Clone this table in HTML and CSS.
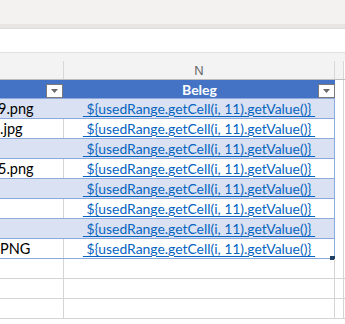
FILE: index.html
```html
<!DOCTYPE html>
<html>
<head>
<meta charset="utf-8">
<link rel="stylesheet" href="styles.css">
</head>
<body>
<div class="app">
  <div class="ribbon"></div>
  <div class="ribbon-edge"></div>
  <div class="formula"></div>
  <div class="colheads">
    <div class="row-cells">
      <div class="cell c1 ch"></div>
      <div class="cell c2 ch">N</div>
      <div class="cell c3 ch"></div>
      <div class="cell c4 ch"></div>
    </div>
  </div>
  <div class="sheet">
    <div class="row-cells trow thead">
      <div class="cell c1"><span class="dd"><svg width="7" height="4" viewBox="0 0 7 4"><path d="M0 0H7L3.5 4Z" fill="#6b6b6b"/></svg></span></div>
      <div class="cell c2 hname">Beleg<span class="dd"><svg width="7" height="4" viewBox="0 0 7 4"><path d="M0 0H7L3.5 4Z" fill="#6b6b6b"/></svg></span></div>
      <div class="cell c3 out"></div>
      <div class="cell c4"></div>
    </div>
    <div class="row-cells trow band">
      <div class="cell c1 txt"><span class="clip">9.png</span></div>
      <div class="cell c2"><a class="link">&nbsp;${usedRange.getCell(i, 11).getValue()}&nbsp;</a></div>
      <div class="cell c3 out"></div>
      <div class="cell c4"></div>
    </div>
    <div class="row-cells trow plain">
      <div class="cell c1 txt"><span class="clip2">.jpg</span></div>
      <div class="cell c2"><a class="link">&nbsp;${usedRange.getCell(i, 11).getValue()}&nbsp;</a></div>
      <div class="cell c3 out"></div>
      <div class="cell c4"></div>
    </div>
    <div class="row-cells trow band">
      <div class="cell c1 txt"></div>
      <div class="cell c2"><a class="link">&nbsp;${usedRange.getCell(i, 11).getValue()}&nbsp;</a></div>
      <div class="cell c3 out"></div>
      <div class="cell c4"></div>
    </div>
    <div class="row-cells trow plain">
      <div class="cell c1 txt"><span class="clip">5.png</span></div>
      <div class="cell c2"><a class="link">&nbsp;${usedRange.getCell(i, 11).getValue()}&nbsp;</a></div>
      <div class="cell c3 out"></div>
      <div class="cell c4"></div>
    </div>
    <div class="row-cells trow band">
      <div class="cell c1 txt"></div>
      <div class="cell c2"><a class="link">&nbsp;${usedRange.getCell(i, 11).getValue()}&nbsp;</a></div>
      <div class="cell c3 out"></div>
      <div class="cell c4"></div>
    </div>
    <div class="row-cells trow plain">
      <div class="cell c1 txt"></div>
      <div class="cell c2"><a class="link">&nbsp;${usedRange.getCell(i, 11).getValue()}&nbsp;</a></div>
      <div class="cell c3 out"></div>
      <div class="cell c4"></div>
    </div>
    <div class="row-cells trow band">
      <div class="cell c1 txt"></div>
      <div class="cell c2"><a class="link">&nbsp;${usedRange.getCell(i, 11).getValue()}&nbsp;</a></div>
      <div class="cell c3 out"></div>
      <div class="cell c4"></div>
    </div>
    <div class="row-cells trow plain last">
      <div class="cell c1 txt"><span class="clip2">PNG</span></div>
      <div class="cell c2 handle-cell"><a class="link">&nbsp;${usedRange.getCell(i, 11).getValue()}&nbsp;</a><span class="handle"></span></div>
      <div class="cell c3 out"></div>
      <div class="cell c4"></div>
    </div>
    <div class="row-cells grow">
      <div class="cell c1"></div><div class="cell c2"></div><div class="cell c3 out"></div><div class="cell c4"></div>
    </div>
    <div class="row-cells grow">
      <div class="cell c1"></div><div class="cell c2"></div><div class="cell c3 out"></div><div class="cell c4"></div>
    </div>
    <div class="row-cells grow">
      <div class="cell c1"></div><div class="cell c2"></div><div class="cell c3 out"></div><div class="cell c4"></div>
    </div>
  </div>
</div>
</body>
</html>
```
FILE: styles.css
```css
html, body {
  margin: 0;
  padding: 0;
  background: #ffffff;
}
.app {
  width: 345px;
  height: 324px;
  overflow: hidden;
  font-family: "Lato", "Liberation Sans", sans-serif;
  font-size: 14px;
}
.ribbon {
  height: 24px;
  background: #f3f2f1;
}
.ribbon-edge {
  height: 4px;
  background: #e7e6e5;
  border-bottom: 1px solid #dcdcdc;
}
.formula {
  height: 23px;
  background: #ffffff;
  border-bottom: 1px solid #e1e1e1;
}
.colheads {
  background: #f3f3f3;
  padding-top: 8px;
  border-bottom: 1px solid #bdbdbd;
}
.row-cells {
  display: flex;
}
.cell {
  box-sizing: border-box;
  flex: none;
  position: relative;
}
.c1 { width: 64px; border-right: 1px solid #d4d4d4; }
.c2 { width: 271px; border-right: 1px solid #d4d4d4; }
.c3 { width: 9px; border-right: 1px solid #d4d4d4; }
.c4 { flex: 1; }
.ch {
  height: 18px;
  line-height: 20px;
  text-align: center;
  color: #666666;
  font-family: "Liberation Sans", sans-serif;
  font-size: 13px;
}
.colheads .c1, .colheads .c2, .colheads .c3 { border-right-color: #d8d8d8; }
.sheet .row-cells {
  height: 20px;
  box-sizing: border-box;
}
.thead {
  height: 19px !important;
  background: #4472c4;
}
.thead .c1, .thead .c2 { border-right: none; }
.hname {
  color: #ffffff;
  font-weight: 700;
  text-align: center;
  line-height: 19px;
}
.dd {
  position: absolute;
  right: 0;
  top: 4px;
  width: 17px;
  height: 14px;
  box-sizing: border-box;
  background: #ffffff;
  border: 1px solid #7a7a7a;
  display: flex;
  align-items: center;
  justify-content: center;
}
.thead .c1 .dd { right: 1px; }
.out, .c4 { background: #ffffff; }
.trow {
  border-bottom: 1px solid #8ea9db;
}
.trow .c1, .trow .c2 {
  height: 19px;
}
.band .c1, .band .c2 {
  background: #d9e1f2;
}
.band .c1 { border-right: none; }
.band .c2, .plain .c2 { border-right: 1px solid #8ea9db; }
.trow .c3, .trow .c4 {
  margin-bottom: -1px;
  height: 20px;
}
.txt {
  line-height: 19px;
  color: #000000;
  overflow: hidden;
  white-space: nowrap;
  font-size: 14.5px;
}
.clip { margin-left: -2px; }
.clip2 { margin-left: 0; }
.c2 {
  text-align: center;
  line-height: 19px;
  white-space: nowrap;
}
.link {
  color: #0563c1;
  font-size: 13.9px;
  text-decoration: underline;
  text-underline-offset: 2px;
}
.grow {
  border-bottom: 1px solid #d4d4d4;
}
.handle {
  position: absolute;
  right: -1px;
  bottom: -2px;
  width: 5px;
  height: 4px;
  background: #1f3f66;
}
```
